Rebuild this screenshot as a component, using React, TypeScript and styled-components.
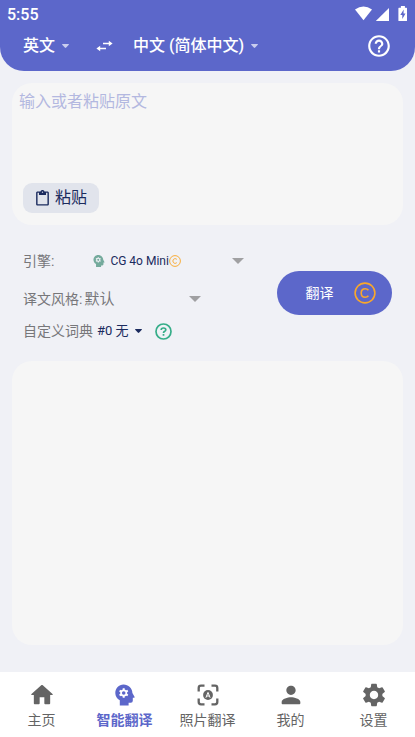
import React from "react";
import styled, { createGlobalStyle } from "styled-components";
import { MdSettings, MdHelpOutline, MdContentPaste } from "react-icons/md";

const Global = createGlobalStyle`
  *, *::before, *::after { box-sizing: border-box; }
  body { margin: 0; background: #f0f1f6; font-family: Roboto, "Noto Sans CJK SC", sans-serif; }
  button, textarea { font-family: inherit; }
  svg { display: block; flex: none; }
`;

const Page = styled.div`
  min-height: 100vh;
  display: flex;
  flex-direction: column;
`;

const Header = styled.header`
  background: #5c67ca;
  color: #fff;
  border-radius: 0 0 24px 24px;
  padding-bottom: 7px;
`;

const StatusBar = styled.div`
  height: 28px;
  padding: 0 8px 0 7px;
  display: flex;
  align-items: center;
  justify-content: space-between;
`;

const Clock = styled.time`
  padding-top: 2px;
  font-size: 16px;
  line-height: 20px;
  font-weight: 500;
`;

const StatusIcons = styled.div`
  display: flex;
  align-items: center;
`;

const LanguageBar = styled.div`
  height: 36px;
  padding: 0 23px;
  display: flex;
  align-items: center;
`;

const PlainButton = styled.button`
  border: 0;
  padding: 0;
  background: none;
  color: inherit;
  display: flex;
  align-items: center;
  cursor: pointer;
`;

const LanguageButton = styled(PlainButton)`
  gap: 7px;
  font-size: 16px;
  line-height: 24px;
  font-weight: 500;
  white-space: nowrap;
`;

const SwapButton = styled(PlainButton)`
  margin: 0 20px 0 27px;
`;

const HelpButton = styled(PlainButton)`
  margin-left: auto;
`;

const Main = styled.main`
  flex: 1;
  display: flex;
  flex-direction: column;
  padding: 12px 12px 27px;
`;

const Card = styled.section`
  background: #f6f6f6;
  border-radius: 20px;
`;

const SourceCard = styled(Card)`
  padding: 7px 7px 12px;
`;

const SourceInput = styled.textarea`
  display: block;
  width: 100%;
  height: 93px;
  padding: 0;
  border: 0;
  outline: 0;
  resize: none;
  background: transparent;
  color: #1b2b5e;
  font-size: 16px;
  line-height: 24px;
  &::placeholder { color: #b3b8e0; opacity: 1; }
`;

const PasteButton = styled(PlainButton)`
  height: 30px;
  margin-left: 4px;
  padding: 0 12px 0 11px;
  gap: 4px;
  border-radius: 9px;
  background: #e1e4ec;
  color: #1b2b5e;
  font-size: 16px;
  line-height: 24px;
`;

const ResultCard = styled(Card)`
  flex: 1;
`;

const Controls = styled.section`
  display: flex;
  align-items: center;
  justify-content: space-between;
  padding: 17px 11px;
`;

const Options = styled.div`
  display: flex;
  flex-direction: column;
`;

const Row = styled.div<{ $height: number }>`
  height: ${(p) => p.$height}px;
  display: flex;
  align-items: center;
  color: #77777a;
  font-size: 14px;
  line-height: 20px;
  white-space: nowrap;
`;

const EngineButton = styled(PlainButton)`
  width: 153px;
  margin-left: 37px;
  color: #1b2b5e;
  font-size: 12px;
  line-height: 20px;
`;

const EngineName = styled.span`
  margin-left: 3px;
`;

const StyleButton = styled(PlainButton)`
  width: 117px;
  margin-left: 2px;
  justify-content: space-between;
  font-size: 15px;
  line-height: 20px;
`;

const DictionaryButton = styled(PlainButton)`
  margin: 0 13px 0 4px;
  gap: 6px;
  color: #1b2b5e;
  font-size: 13px;
  line-height: 20px;
`;

const Trailing = styled.span`
  margin-left: auto;
`;

const TranslateButton = styled(PlainButton)`
  width: 115px;
  height: 44px;
  padding-left: 12px;
  justify-content: center;
  gap: 20px;
  border-radius: 22px;
  background: #5c67ca;
  color: #fff;
  font-size: 14px;
  line-height: 20px;
`;

const TabBar = styled.nav`
  height: 65px;
  display: flex;
  background: #fff;
`;

const Tab = styled.button<{ $active?: boolean }>`
  flex: 1 1 0;
  min-width: 0;
  border: 0;
  padding: 9px 0 0;
  background: none;
  display: flex;
  flex-direction: column;
  align-items: center;
  gap: 1px;
  color: ${(p) => (p.$active ? "#5c67ca" : "#646464")};
  font-size: 14px;
  line-height: 20px;
  font-weight: ${(p) => (p.$active ? 700 : 400)};
  white-space: nowrap;
  cursor: pointer;
`;

const Caret = ({ color }: { color: string }) => (
  <svg width="12" height="6" viewBox="0 0 12 6" fill={color} aria-hidden="true">
    <path d="M0 0h12L6 6z" />
  </svg>
);

const SmallCaret = ({ color }: { color: string }) => (
  <svg width="7" height="4" viewBox="0 0 7 4" fill={color} aria-hidden="true">
    <path d="M.6 0h5.800q.8 0 .4.8L4.200 3.600q-.7.7-1.400 0L.2.8Q-.2 0 .6 0z" />
  </svg>
);

const Coin = ({ size, stroke }: { size: number; stroke: number }) => (
  <svg width={size} height={size} viewBox="0 0 22 22" fill="none" stroke="#f9a72b" strokeWidth={stroke} aria-hidden="true">
    <circle cx="11" cy="11" r="9.900" />
    <path d="M14.400 8.200C13.600 7.100 12.500 6.700 11.200 6.700 8.800 6.700 7.200 8.500 7.200 11s1.600 4.300 4 4.300c1.300 0 2.400-.4 3.200-1.500" />
  </svg>
);

const HeadIcon = ({ size, color = "currentColor", hole }: { size: number; color?: string; hole: string }) => (
  <svg width={size} height={size} viewBox="0 0 28 28" fill={color} aria-hidden="true">
    <path d="M12.500 3.500C7.800 3.500 4.300 7.300 4.300 12c0 3.200 1.700 5.900 4.500 7.300V24.600h8.800v-2.900h2.200q2 0 2-2v-3h1.300q.9 0 .4-.9L21.400 12C21.400 7.300 17.400 3.500 12.500 3.500z" />
    <circle cx="12.700" cy="12" r="3.500" fill={hole} />
    <path stroke={hole} strokeWidth="2" d="M12.700 7.300v9.400M8.600 9.650l8.200 4.700M8.600 14.350l8.200-4.700" />
    <circle cx="12.700" cy="12" r="1.800" />
  </svg>
);

const HomeIcon = () => (
  <svg width="28" height="28" viewBox="0 0 24 24" fill="currentColor" aria-hidden="true">
    <path d="M10 19v-5h4v5c0 .55.45 1 1 1h3c.55 0 1-.45 1-1v-7h1.700c.46 0 .68-.57.33-.87L12.670 3.600c-.38-.34-.96-.34-1.340 0l-8.360 7.530c-.34.3-.13.87.33.87H5v7c0 .55.45 1 1 1h3c.55 0 1-.45 1-1z" />
  </svg>
);

const PersonIcon = () => (
  <svg width="28" height="28" viewBox="0 0 24 24" fill="currentColor" aria-hidden="true">
    <path d="M12 12c2.210 0 4-1.790 4-4s-1.790-4-4-4-4 1.790-4 4 1.790 4 4 4zm0 2c-2.670 0-8 1.340-8 4v1c0 .55.45 1 1 1h14c.55 0 1-.45 1-1v-1c0-2.660-5.330-4-8-4z" />
  </svg>
);

const ScanIcon = () => (
  <svg width="28" height="28" viewBox="0 0 28 28" fill="none" stroke="currentColor" aria-hidden="true">
    <path strokeWidth="2.300" d="M4.700 10.500V7q0-2.300 2.300-2.300h3.500M17.500 4.700H21q2.300 0 2.300 2.300v3.500M23.300 17.500V21q0 2.300-2.300 2.300h-3.500M10.500 23.300H7q-2.300 0-2.300-2.300v-3.500" />
    <circle cx="14" cy="14" r="4.900" fill="currentColor" stroke="none" />
    <path stroke="#fff" strokeWidth="1" d="M11.900 16.700 14 11.400l2.100 5.300M12.700 15h2.600" />
  </svg>
);

const SwapIcon = () => (
  <svg width="17" height="12" viewBox="0 0 17 12" fill="none" stroke="currentColor" strokeWidth="1.500" aria-hidden="true">
    <path d="M7 3.500h7M10 8.500H3" />
    <path d="M12.800.7v5.600L16.600 3.500zM4.200 5.700v5.600L.4 8.500z" fill="currentColor" stroke="none" />
  </svg>
);

const SignalIcons = () => (
  <svg width="52" height="16" viewBox="0 0 52 16" fill="#fff" aria-hidden="true">
    <path d="M0 3.400Q8.500-2.500 17 3.400L8.500 14.200z" />
    <path d="M34 2v13H20.800z" />
    <path d="M43.900 1.800h2V0h4v1.800h1.600q.5 0 .5.600V14.500q0 .5-.5.500H43.900q-.5 0-.5-.5V2.400q0-.6.500-.6z" />
    <path fill="#5c67ca" d="M48.700 3.500 45.300 9h2v4l3.200-5.600h-2z" />
  </svg>
);

const HelpBadge = () => (
  <svg width="17" height="17" viewBox="0 0 17 17" fill="none" stroke="#35ad88" strokeWidth="1.700" aria-hidden="true">
    <circle cx="8.500" cy="8.500" r="7.500" />
    <path d="M6.200 7q0-2 2.300-2 2.300 0 2.300 1.700 0 1-1.100 1.600Q8.500 8.900 8.500 10M8.500 11v1.700" />
  </svg>
);

export default function App() {
  return (
    <>
      <Global />
      <Page>
        <Header>
          <StatusBar>
            <Clock>5:55</Clock>
            <StatusIcons><SignalIcons /></StatusIcons>
          </StatusBar>
          <LanguageBar>
            <LanguageButton>英文<SmallCaret color="#c9cdee" /></LanguageButton>
            <SwapButton aria-label="交换语言"><SwapIcon /></SwapButton>
            <LanguageButton>中文 (简体中文)<SmallCaret color="#c9cdee" /></LanguageButton>
            <HelpButton aria-label="帮助"><MdHelpOutline size={26} /></HelpButton>
          </LanguageBar>
        </Header>
        <Main>
          <SourceCard>
            <SourceInput aria-label="原文" placeholder="输入或者粘贴原文" />
            <PasteButton><MdContentPaste size={17} />粘贴</PasteButton>
          </SourceCard>
          <Controls>
            <Options>
              <Row $height={38}>
                引擎:
                <EngineButton>
                  <HeadIcon size={16} color="#74aa9c" hole="#f0f1f6" />
                  <EngineName>CG 4o Mini</EngineName>
                  <Coin size={12} stroke={1.7} />
                  <Trailing><Caret color="#a0a0a2" /></Trailing>
                </EngineButton>
              </Row>
              <Row $height={38}>
                译文风格:
                <StyleButton>默认<Caret color="#a0a0a2" /></StyleButton>
              </Row>
              <Row $height={26}>
                自定义词典
                <DictionaryButton>#0 无<SmallCaret color="#1b2b5e" /></DictionaryButton>
                <PlainButton aria-label="词典帮助"><HelpBadge /></PlainButton>
              </Row>
            </Options>
            <TranslateButton>翻译<Coin size={22} stroke={1.6} /></TranslateButton>
          </Controls>
          <ResultCard aria-label="译文" />
        </Main>
        <TabBar>
          <Tab><HomeIcon />主页</Tab>
          <Tab $active aria-current="page"><HeadIcon size={28} hole="#fff" />智能翻译</Tab>
          <Tab><ScanIcon />照片翻译</Tab>
          <Tab><PersonIcon />我的</Tab>
          <Tab><MdSettings size={28} />设置</Tab>
        </TabBar>
      </Page>
    </>
  );
}
